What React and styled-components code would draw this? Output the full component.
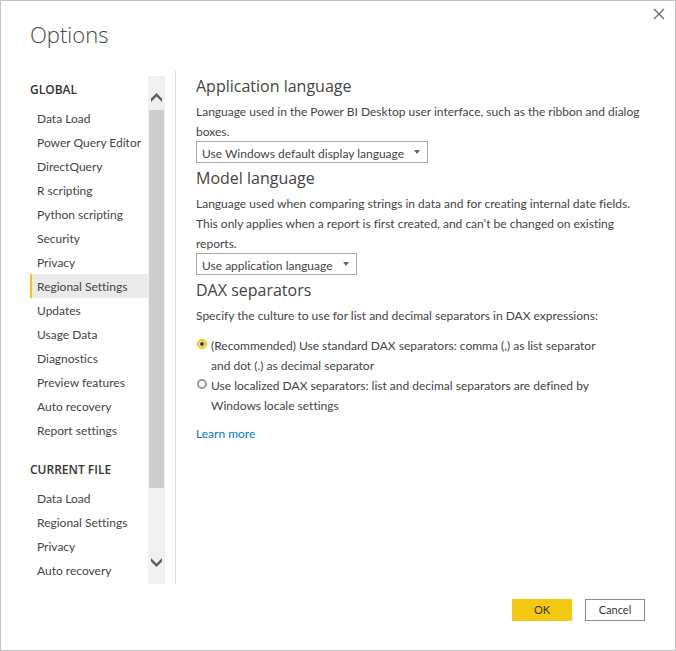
import { useState } from 'react';
import styled, { createGlobalStyle } from 'styled-components';

const GlobalStyle = createGlobalStyle`
  * {
    box-sizing: border-box;
  }
  body {
    margin: 0;
    background-color: white;
    color: #444444;
    font-family: Lato, 'Open Sans', sans-serif;
    font-size: 12px;
    font-variant-ligatures: none;
    line-height: 20px;
  }
`;

const Dialog = styled.div`
  display: flex;
  flex-direction: column;
  min-height: 100vh;
  border: 1px solid #c2c2c2;
`;

const Header = styled.header`
  display: flex;
  justify-content: space-between;
  align-items: flex-start;
  height: 70px;
  padding: 6px 9px 0px 29px;
`;

const Title = styled.h1`
  margin: 11px 0px 0px;
  font-family: 'Open Sans', sans-serif;
  font-size: 22px;
  line-height: 32px;
  font-weight: 300;
`;

const CloseButton = styled.button`
  display: flex;
  padding: 1px;
  border: none;
  background: none;
  color: #666666;
  cursor: pointer;
`;

const Body = styled.div`
  flex: 1;
  display: flex;
`;

const Sidebar = styled.nav`
  display: flex;
  width: 175px;
  flex-shrink: 0;
  padding: 5px 10px 0px 29px;
  border-right: 1px solid #dcdcdc;
`;

const Groups = styled.div`
  flex: 1;
  display: flex;
  flex-direction: column;
  gap: 16px;
  padding-top: 2px;
`;

const GroupTitle = styled.h2`
  margin: 0px 0px 4px;
  font-family: 'Open Sans', sans-serif;
  font-size: 12px;
  line-height: 24px;
  font-weight: 600;
  color: #333333;
`;

const List = styled.ul`
  margin: 0px;
  padding: 0px;
  list-style: none;
`;

const Item = styled.button`
  display: block;
  width: 100%;
  height: 24px;
  padding: 2px 0px 0px 5px;
  border: none;
  border-left: 2px solid ${(props) => (props.$active ? '#f2c811' : 'transparent')};
  background-color: ${(props) => (props.$active ? '#eaeaea' : 'transparent')};
  color: inherit;
  font: inherit;
  text-align: left;
  white-space: nowrap;
  cursor: pointer;
`;

const Scrollbar = styled.div`
  display: flex;
  flex-direction: column;
  width: 17px;
  background-color: #f0f0f0;
`;

const ScrollButton = styled.button`
  display: flex;
  justify-content: center;
  align-items: center;
  height: 34px;
  padding: ${(props) => (props.$down ? '0px 0px 10px' : '8px 0px 0px')};
  border: none;
  background: none;
  color: #606060;
`;

const Track = styled.div`
  flex: 1;
  padding: 0px 1px;
`;

const Thumb = styled.div`
  height: 86%;
  background-color: #cdcdcd;
`;

const Content = styled.main`
  flex: 1;
  padding: 0px 29px 0px 20px;
`;

const Heading = styled.h2`
  margin: 0px;
  font-family: 'Open Sans', sans-serif;
  font-size: 16px;
  line-height: 30px;
  font-weight: 400;
`;

const Text = styled.p`
  margin: 1px 0px -1px;
`;

const SelectBox = styled.div`
  display: grid;
  align-items: center;
  width: ${(props) => props.$width}px;
  max-width: 100%;
  height: 22px;

  > * {
    grid-area: 1 / 1;
  }
  > svg {
    justify-self: end;
    margin-right: 8px;
    pointer-events: none;
  }
`;

const Select = styled.select`
  width: 100%;
  height: 22px;
  padding: 2px 5px 0px;
  border: 1px solid #ababab;
  border-radius: 0px;
  background-color: white;
  color: inherit;
  font: inherit;
  appearance: none;
`;

const Options = styled.div`
  margin: 11px 0px 8px;
`;

const Option = styled.label`
  display: flex;
  align-items: flex-start;
  gap: 4px;
  max-width: 420px;
`;

const Radio = styled.input`
  flex-shrink: 0;
  width: 10px;
  height: 10px;
  margin: 3px 0px 0px 1px;
  border: 2px solid #999999;
  border-radius: 50%;
  background-color: white;
  appearance: none;

  &:checked {
    border-color: #f2c811;
    background: radial-gradient(circle, #333333 0px 1px, white 3px);
  }
`;

const Link = styled.a`
  color: #0078d4;
  text-decoration: none;
`;

const Footer = styled.footer`
  display: flex;
  justify-content: flex-end;
  gap: 13px;
  padding: 15px 30px 29px;
`;

const Button = styled.button`
  width: 60px;
  height: 22px;
  padding: 0px;
  border: 1px solid ${(props) => (props.$primary ? '#f2c811' : '#8a8a8a')};
  background-color: ${(props) => (props.$primary ? '#f2c811' : 'white')};
  color: #333333;
  font: inherit;
  font-size: 11px;
  cursor: pointer;
`;

const groups = [
  {
    title: 'GLOBAL',
    items: [
      'Data Load',
      'Power Query Editor',
      'DirectQuery',
      'R scripting',
      'Python scripting',
      'Security',
      'Privacy',
      'Regional Settings',
      'Updates',
      'Usage Data',
      'Diagnostics',
      'Preview features',
      'Auto recovery',
      'Report settings',
    ],
  },
  {
    title: 'CURRENT FILE',
    items: ['Data Load', 'Regional Settings', 'Privacy', 'Auto recovery'],
  },
];

const Chevron = ({ down }) => (
  <svg width="11" height="9" viewBox="0 0 11 9">
    <path
      d={down ? 'M0 0 5.5 5.5 11 0V3.5L5.5 9 0 3.5Z' : 'M0 9 5.5 3.5 11 9V5.5L5.5 0 0 5.5Z'}
      fill="currentColor"
    />
  </svg>
);

const Dropdown = ({ id, label, width, value }) => (
  <SelectBox $width={width}>
    <Select id={id} aria-label={label}>
      <option>{value}</option>
    </Select>
    <svg width="6" height="4" viewBox="0 0 6 4">
      <path d="M0 0H6L3 4Z" fill="#666666" />
    </svg>
  </SelectBox>
);

const App = () => {
  const [page, setPage] = useState('GLOBAL/Regional Settings');
  const [separators, setSeparators] = useState('standard');

  return (
    <Dialog role="dialog" aria-labelledby="title">
      <GlobalStyle />
      <Header>
        <Title id="title">Options</Title>
        <CloseButton aria-label="Close">
          <svg width="12" height="12" viewBox="0 0 12 12">
            <path d="M1 1 11 11M11 1 1 11" stroke="currentColor" strokeWidth="1.2" />
          </svg>
        </CloseButton>
      </Header>
      <Body>
        <Sidebar>
          <Groups>
            {groups.map((group) => (
              <section key={group.title}>
                <GroupTitle>{group.title}</GroupTitle>
                <List>
                  {group.items.map((item) => {
                    const key = `${group.title}/${item}`;
                    return (
                      <li key={key}>
                        <Item $active={page === key} onClick={() => setPage(key)}>
                          {item}
                        </Item>
                      </li>
                    );
                  })}
                </List>
              </section>
            ))}
          </Groups>
          <Scrollbar>
            <ScrollButton aria-label="Scroll up">
              <Chevron />
            </ScrollButton>
            <Track>
              <Thumb />
            </Track>
            <ScrollButton aria-label="Scroll down" $down>
              <Chevron down />
            </ScrollButton>
          </Scrollbar>
        </Sidebar>
        <Content>
          <Heading>Application language</Heading>
          <Text>
            Language used in the Power BI Desktop user interface, such as the ribbon and dialog
            boxes.
          </Text>
          <Dropdown
            id="app-language"
            label="Application language"
            width={232}
            value="Use Windows default display language"
          />
          <Heading>Model language</Heading>
          <Text>
            Language used when comparing strings in data and for creating internal date fields.
            This only applies when a report is first created, and can’t be changed on existing
            reports.
          </Text>
          <Dropdown
            id="model-language"
            label="Model language"
            width={161}
            value="Use application language"
          />
          <Heading>DAX separators</Heading>
          <Text>
            Specify the culture to use for list and decimal separators in DAX expressions:
          </Text>
          <Options>
            <Option>
              <Radio
                type="radio"
                name="separators"
                checked={separators === 'standard'}
                onChange={() => setSeparators('standard')}
              />
              <span>
                (Recommended) Use standard DAX separators: comma (,) as list separator and dot (.)
                as decimal separator
              </span>
            </Option>
            <Option>
              <Radio
                type="radio"
                name="separators"
                checked={separators === 'localized'}
                onChange={() => setSeparators('localized')}
              />
              <span>
                Use localized DAX separators: list and decimal separators are defined by Windows
                locale settings
              </span>
            </Option>
          </Options>
          <Link href="#">Learn more</Link>
        </Content>
      </Body>
      <Footer>
        <Button $primary>OK</Button>
        <Button>Cancel</Button>
      </Footer>
    </Dialog>
  );
};

export default App;
